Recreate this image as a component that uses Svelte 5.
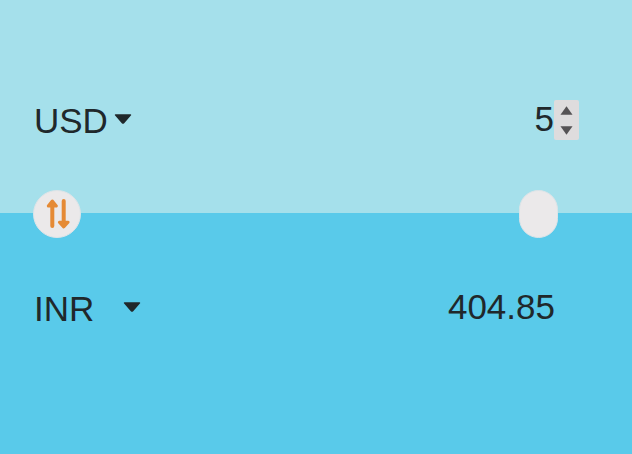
<script>
  const rates = { USD: 1, INR: 80.97, EUR: 0.92 };
  const codes = Object.keys(rates);

  let from = $state('USD');
  let to = $state('INR');
  let amount = $state(5);

  const result = $derived(((amount || 0) * rates[to] / rates[from]).toFixed(2));

  function swap() {
    [from, to] = [to, from];
  }

  function reset() {
    amount = 5;
  }
</script>

{#snippet caret()}
  <svg class="caret" viewBox="0 0 18 10" aria-hidden="true">
    <path d="M1.5 0.3h15q1.2 0.3 0.4 1.3L10.2 9.3q-1.2 1-2.4 0L1.1 1.6q-0.8-1 0.4-1.3z" />
  </svg>
{/snippet}

<main>
  <section class="panel source">
    <div class="row">
      <div class="picker">
        <select bind:value={from} aria-label="From currency">
          {#each codes as code}<option value={code}>{code}</option>{/each}
        </select>
        {@render caret()}
      </div>
      <div class="entry">
        <input type="number" min="0" bind:value={amount} aria-label="Amount" />
        <div class="stepper">
          <button type="button" aria-label="Increase amount" onclick={() => amount++}>
            <svg viewBox="0 0 14 9" aria-hidden="true"><path d="M7 0l6.5 9h-13z" /></svg>
          </button>
          <button type="button" aria-label="Decrease amount" onclick={() => amount--}>
            <svg viewBox="0 0 14 9" aria-hidden="true"><path d="M0.5 0h13L7 9z" /></svg>
          </button>
        </div>
      </div>
    </div>
    <div class="actions">
      <button type="button" class="swap" aria-label="Swap currencies" onclick={swap}>
        <svg viewBox="0 0 26 30" aria-hidden="true">
          <path class="stem" d="M8.3 5v22M19.7 2v22" />
          <path class="head" d="M8.3 2L12.3 7H4.3zM19.7 28L24 23.2h-8.6z" />
        </svg>
      </button>
      <button type="button" class="pill" aria-label="Reset amount" onclick={reset}></button>
    </div>
  </section>

  <section class="panel target">
    <div class="row">
      <div class="picker wide">
        <select bind:value={to} aria-label="To currency">
          {#each codes as code}<option value={code}>{code}</option>{/each}
        </select>
        {@render caret()}
      </div>
      <output>{result}</output>
    </div>
  </section>
</main>

<style>
  main {
    display: flex;
    flex-direction: column;
    min-height: 100vh;
    font-family: "Liberation Sans", Arial, sans-serif;
    color: #20282b;
  }

  .panel {
    box-sizing: border-box;
    padding: 72px 53px 68px 34px;
  }

  .source {
    position: relative;
    padding-top: 97px;
    background: #a5e0eb;
  }

  .target {
    flex: 1;
    background: #59caea;
  }

  .row {
    display: flex;
    align-items: center;
    justify-content: space-between;
    height: 48px;
  }

  .picker {
    display: grid;
    align-items: center;
    width: 98px;
  }

  .picker.wide {
    width: 107px;
  }

  select,
  input,
  output {
    box-sizing: border-box;
    height: 48px;
    color: inherit;
    font-family: inherit;
    font-size: 35px;
    line-height: 48px;
  }

  select,
  input {
    margin: 0;
    padding: 0;
    border: 0;
    border-radius: 0;
    background: transparent;
    appearance: none;
  }

  select {
    grid-area: 1 / 1;
    width: 100%;
    cursor: pointer;
  }

  .caret {
    grid-area: 1 / 1;
    justify-self: end;
    width: 18px;
    height: 10px;
    margin-bottom: 4px;
    fill: #20282b;
    pointer-events: none;
  }

  input,
  output {
    line-height: 44px;
  }

  input {
    width: 180px;
    padding-bottom: 4px;
    text-align: right;
    appearance: textfield;
  }

  input::-webkit-inner-spin-button,
  input::-webkit-outer-spin-button {
    margin: 0;
    appearance: none;
  }

  output {
    margin-right: 24px;
  }

  .entry {
    display: flex;
    align-items: center;
  }

  .stepper {
    display: flex;
    flex-direction: column;
    box-sizing: border-box;
    width: 25px;
    height: 40px;
    margin-bottom: 2px;
    border-radius: 2px;
    background: #dedcdd;
  }

  button {
    display: flex;
    align-items: center;
    justify-content: center;
    padding: 0;
    border: 0;
    background: transparent;
    cursor: pointer;
  }

  .stepper button {
    flex: 1;
  }

  .stepper svg {
    width: 13px;
    height: 9px;
    fill: #555355;
  }

  .actions {
    position: absolute;
    right: 74px;
    bottom: -25px;
    left: 33px;
    display: flex;
    justify-content: space-between;
  }

  .actions button {
    box-sizing: border-box;
    height: 48px;
    border: 1px solid #dce4e8;
    background: #ebe9ea;
  }

  .actions .swap {
    width: 48px;
    border-radius: 50%;
  }

  .actions .pill {
    width: 39px;
    border-radius: 20px;
  }

  .swap svg {
    width: 26px;
    height: 30px;
    fill: #e58a35;
    stroke: #e58a35;
    stroke-linecap: round;
    stroke-linejoin: round;
  }

  .stem {
    stroke-width: 4;
  }

  .head {
    stroke-width: 3;
  }
</style>
